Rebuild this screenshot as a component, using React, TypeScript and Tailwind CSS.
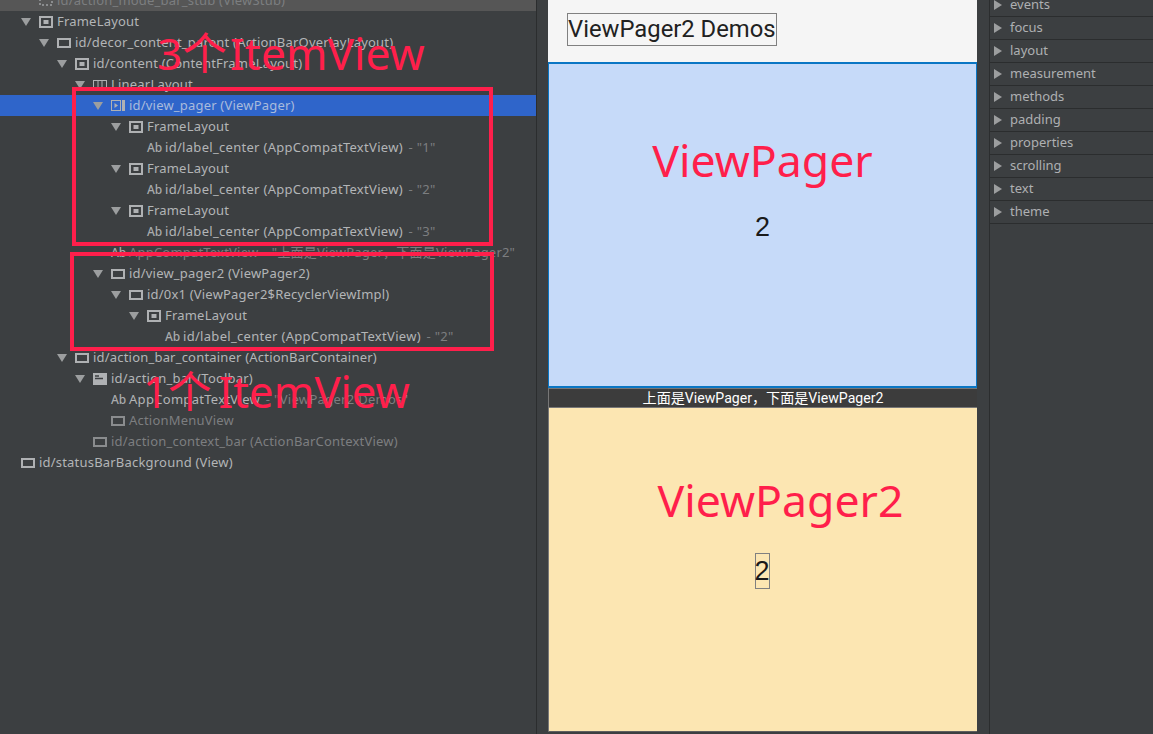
import React from 'react';

const indents = ['pl-[3px]', 'pl-[21px]', 'pl-[39px]', 'pl-[57px]', 'pl-[75px]', 'pl-[93px]', 'pl-[111px]', 'pl-[129px]', 'pl-[147px]'];

type IconName = 'frame' | 'rect' | 'linear' | 'pager' | 'bar' | 'stub' | 'text';

type Row = {
  depth: number;
  open?: boolean;
  icon: IconName;
  text: string;
  value?: string;
  dim?: boolean;
  selected?: boolean;
  hover?: boolean;
};

const rows: Row[] = [
  { depth: 1, icon: 'stub', text: 'id/action_mode_bar_stub (ViewStub)', dim: true, hover: true },
  { depth: 1, open: true, icon: 'frame', text: 'FrameLayout' },
  { depth: 2, open: true, icon: 'rect', text: 'id/decor_content_parent (ActionBarOverlayLayout)' },
  { depth: 3, open: true, icon: 'frame', text: 'id/content (ContentFrameLayout)' },
  { depth: 4, open: true, icon: 'linear', text: 'LinearLayout' },
  { depth: 5, open: true, icon: 'pager', text: 'id/view_pager (ViewPager)', selected: true },
  { depth: 6, open: true, icon: 'frame', text: 'FrameLayout' },
  { depth: 7, icon: 'text', text: 'id/label_center (AppCompatTextView)', value: ' - "1"' },
  { depth: 6, open: true, icon: 'frame', text: 'FrameLayout' },
  { depth: 7, icon: 'text', text: 'id/label_center (AppCompatTextView)', value: ' - "2"' },
  { depth: 6, open: true, icon: 'frame', text: 'FrameLayout' },
  { depth: 7, icon: 'text', text: 'id/label_center (AppCompatTextView)', value: ' - "3"' },
  { depth: 5, icon: 'text', text: 'AppCompatTextView', value: ' - "上面是ViewPager，下面是ViewPager2"', dim: true },
  { depth: 5, open: true, icon: 'rect', text: 'id/view_pager2 (ViewPager2)' },
  { depth: 6, open: true, icon: 'rect', text: 'id/0x1 (ViewPager2$RecyclerViewImpl)' },
  { depth: 7, open: true, icon: 'frame', text: 'FrameLayout' },
  { depth: 8, icon: 'text', text: 'id/label_center (AppCompatTextView)', value: ' - "2"' },
  { depth: 3, open: true, icon: 'rect', text: 'id/action_bar_container (ActionBarContainer)' },
  { depth: 4, open: true, icon: 'bar', text: 'id/action_bar (Toolbar)' },
  { depth: 5, icon: 'text', text: 'AppCompatTextView', value: ' - "ViewPager2 Demos"' },
  { depth: 5, icon: 'rect', text: 'ActionMenuView', dim: true },
  { depth: 4, icon: 'rect', text: 'id/action_context_bar (ActionBarContextView)', dim: true },
  { depth: 0, icon: 'rect', text: 'id/statusBarBackground (View)' },
];

const groups = ['events', 'focus', 'layout', 'measurement', 'methods', 'padding', 'properties', 'scrolling', 'text', 'theme'];

function NodeIcon({ name, dim }: { name: IconName; dim?: boolean }) {
  const stroke = dim ? '#8a8c8e' : '#afb1b3';
  if (name === 'text') {
    return <span className="w-[18px] shrink-0 text-[12px] leading-none font-medium tracking-normal text-[#a9abad]">Ab</span>;
  }
  return (
    <svg width="18" height="14" viewBox="0 0 18 14" className="shrink-0" fill="none">
      {name === 'frame' && (
        <>
          <rect x="1" y="2" width="12" height="10" stroke={stroke} strokeWidth="2" />
          <rect x="4.5" y="5" width="5" height="4" fill={stroke} />
        </>
      )}
      {name === 'rect' && <rect x="1" y="3" width="12" height="8" stroke={stroke} strokeWidth="2" />}
      {name === 'linear' && (
        <>
          <rect x="0.5" y="2.5" width="13" height="9" stroke={stroke} />
          <path d="M5 2v10M9 2v10" stroke={stroke} />
        </>
      )}
      {name === 'pager' && (
        <>
          <rect x="0.5" y="1.5" width="9" height="10" stroke={stroke} />
          <path d="M3.5 4l3.5 2.5L3.5 9z" fill={stroke} />
          <rect x="11" y="1" width="3" height="11" fill={stroke} />
        </>
      )}
      {name === 'bar' && (
        <>
          <rect x="0" y="1" width="14" height="12" fill={stroke} />
          <path d="M2 4h4M2 6.5h8" stroke="#3c3f41" strokeWidth="1.5" />
        </>
      )}
      {name === 'stub' && (
        <rect x="1" y="3" width="12" height="8" stroke={stroke} strokeWidth="2" strokeDasharray="2 2" />
      )}
    </svg>
  );
}

function TreeRow({ row }: { row: Row }) {
  const bg = row.selected ? 'bg-[#2f65ca]' : row.hover ? 'bg-[#565656]' : '';
  const color = row.selected ? 'text-[#a9bbdc]' : row.dim ? 'text-[#7c7e80]' : 'text-[#b3b5b7]';
  // the label rows run a little wider than the rest
  const spacing = row.icon === 'text' && !row.dim ? 'tracking-[0.3px]' : 'tracking-[0.2px]';
  return (
    <div className={`flex h-[21px] items-center whitespace-nowrap ${indents[row.depth]} ${bg} ${color} ${spacing}`}>
      <span className="flex w-[18px] shrink-0">
        {row.open && (
          <svg width="10" height="8" viewBox="0 0 10 8">
            <path d="M0 0h10L5 8z" fill="#9c9e9f" />
          </svg>
        )}
      </span>
      <NodeIcon name={row.icon} dim={row.dim} />
      <span>
        {row.text}
        {row.value && <span className="ml-[2px] text-[#7c7e80]">{row.value}</span>}
      </span>
    </div>
  );
}

export default function App() {
  return (
    <div className="relative flex h-[734px] w-[1153px] overflow-hidden bg-[#3c3f41] font-['Noto_Sans','Noto_Sans_CJK_SC',sans-serif] text-[13px]">
      <div className="w-[536px] shrink-0 -mt-[10px]">
        {rows.map((row, i) => (
          <TreeRow key={i} row={row} />
        ))}
      </div>

      <div className="w-px shrink-0 bg-[#2b2d2e]" />
      <div className="w-[11px] shrink-0" />

      <div className="flex h-[732px] w-[429px] shrink-0 flex-col">
        <div className="flex h-[62px] items-start bg-[#f5f5f5] pt-[13px] pl-[19px]">
          <span className="flex h-[33px] items-center border border-[#808080] pt-px font-['Roboto',sans-serif] text-[23.8px] leading-none text-[#212121]">
            ViewPager2 Demos
          </span>
        </div>
        <div className="flex h-[326px] flex-col items-center border-2 border-x border-[#0a76c4] bg-[#c6daf9] pt-[66px]">
          <span className="text-[44.6px] leading-[60px] text-[#ff1f4b]">ViewPager</span>
          <span className="mt-[21px] font-['Liberation_Sans',sans-serif] text-[27px] leading-[32px] text-[#1a1a1a]">2</span>
        </div>
        <div className="flex h-[19px] items-center justify-center border-t border-l border-[#777] bg-[#3c3c3c] font-['Roboto','Noto_Sans_CJK_SC',sans-serif] text-[14.1px] leading-none text-white">
          上面是ViewPager，下面是ViewPager2
        </div>
        <div className="flex flex-1 flex-col items-center border-t border-b border-l border-t-[#777] border-b-[#5f5f5f] border-l-[#777] bg-[#fce6b2] pt-[62px]">
          <span className="ml-[35px] text-[44.6px] leading-[60px] text-[#ff1f4b]">ViewPager2</span>
          <span className="mt-[23px] mr-[2px] flex h-[36px] w-[15px] items-center justify-center border border-[#808080] font-['Liberation_Sans',sans-serif] text-[27px] leading-none text-[#1a1a1a]">
            2
          </span>
        </div>
      </div>

      <div className="w-[12px] shrink-0" />
      <div className="w-px shrink-0 bg-[#2b2d2e]" />

      <div className="flex-1 -mt-[6px] text-[13px] text-[#aeb0b2]">
        {groups.map(name => (
          <div key={name} className="flex h-[23px] items-center border-b border-[#2b2d2e] pl-[4px]">
            <svg width="8" height="10" viewBox="0 0 8 10" className="mr-[8px] shrink-0">
              <path d="M0 0l8 5-8 5z" fill="#9c9e9f" />
            </svg>
            <span>{name}</span>
          </div>
        ))}
      </div>

      {/* hand-drawn notes laid over the screenshot */}
      <div className="absolute top-[87px] left-[72px] h-[159px] w-[421px] border-4 border-[#ff1f4b]" />
      <div className="absolute top-[252px] left-[70px] h-[99px] w-[424px] border-4 border-[#ff1f4b]" />
      <span className="absolute top-[22px] left-[157px] whitespace-nowrap text-[44.4px] leading-[62px] text-[#ff1f4b]">
        3<span className="mr-[3px]">个</span>ItemView
      </span>
      <span className="absolute top-[361px] left-[143px] whitespace-nowrap text-[43.6px] leading-[60px] text-[#ff1f4b]">
        1<span className="mr-[7px]">个</span>ItemView
      </span>
    </div>
  );
}
